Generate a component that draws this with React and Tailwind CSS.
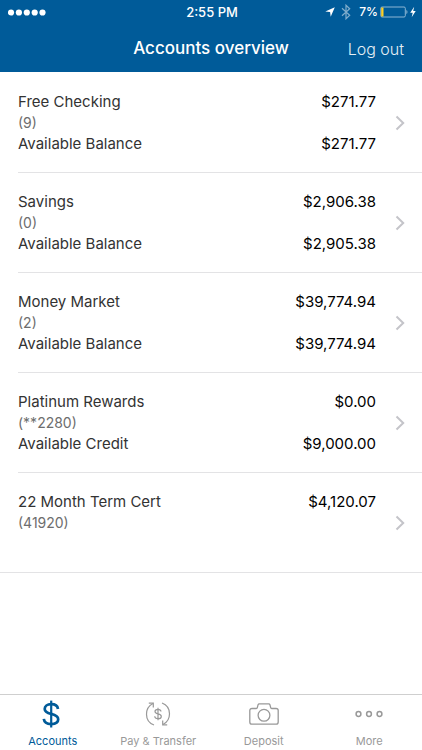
import React, { useState } from 'react';
import clsx from 'clsx';

const ACCOUNTS = [
  { name: 'Free Checking', detail: '(9)', amount: '$271.77', label: 'Available Balance', available: '$271.77' },
  { name: 'Savings', detail: '(0)', amount: '$2,906.38', label: 'Available Balance', available: '$2,905.38' },
  { name: 'Money Market', detail: '(2)', amount: '$39,774.94', label: 'Available Balance', available: '$39,774.94' },
  { name: 'Platinum Rewards', detail: '(**2280)', amount: '$0.00', label: 'Available Credit', available: '$9,000.00' },
  { name: '22 Month Term Cert', detail: '(41920)', amount: '$4,120.07' },
];

const DollarIcon = () => (
  <svg width="24" height="28" viewBox="0 0 24 28" fill="none" stroke="currentColor" strokeWidth="2.7">
    <path d="M17 9C16.600 5.800 14 4.200 10.200 4.200c-4 0-6.500 1.900-6.500 4.700 0 3 2.400 4 6.500 5 4.600 1.100 7 2.200 7 5.400 0 3-2.700 4.800-7 4.800-4.400 0-7-1.900-7.400-5.200" />
    <path d="M10.200.6v26.900" strokeWidth="2.200" />
  </svg>
);

const TransferIcon = () => (
  <svg width="26" height="26" viewBox="0 0 26 26" fill="none" stroke="currentColor" strokeWidth="1.2">
    <path d="M9 24C4.200 22.200 1.500 18 1.500 13.200 1.500 8.600 4 4.500 8 2.500" />
    <path d="M3.800 2.200H8.300V6.600" />
    <path d="M17 2C21.800 3.800 24.500 8 24.500 12.800 24.500 17.400 22 21.500 18 23.500" />
    <path d="M22.200 23.800H17.700V19.400" />
    <path d="M16 10.500C15.800 9.100 14.700 8.400 13 8.400c-1.800 0-3 .8-3 2.200 0 1.300 1 1.800 3 2.300 2.200.5 3.300 1 3.300 2.500s-1.300 2.300-3.200 2.300c-2 0-3.300-.9-3.400-2.500M13 6.800v12.500" />
  </svg>
);

const CameraIcon = () => (
  <svg width="30" height="22" viewBox="0 0 30 22" fill="none" stroke="currentColor" strokeWidth="1.300" strokeLinejoin="round">
    <path d="M3 5.500h4.300c.5 0 .9-.3 1-.8l.8-3c.2-.6.5-.9 1.100-.9h9.600c.6 0 .9.300 1.100.9l.8 3c.1.500.5.8 1 .8H27c1.300 0 2.200.8 2.200 2.100V19c0 1.300-.9 2.200-2.200 2.200H3C1.700 21.200.8 20.300.8 19V7.600c0-1.300.9-2.100 2.200-2.100Z" />
    <circle cx="15" cy="12.300" r="5.900" />
  </svg>
);

const MoreIcon = () => (
  <svg width="28" height="8" viewBox="0 0 28 8" fill="none" stroke="currentColor" strokeWidth="1.500">
    <circle cx="3.500" cy="4" r="2.400" />
    <circle cx="14" cy="4" r="2.400" />
    <circle cx="24.500" cy="4" r="2.400" />
  </svg>
);

const TABS = [
  { name: 'Accounts', Icon: DollarIcon },
  { name: 'Pay & Transfer', Icon: TransferIcon },
  { name: 'Deposit', Icon: CameraIcon },
  { name: 'More', Icon: MoreIcon },
];

const StatusBar = () => (
  <div className="grid grid-cols-[1fr_auto_1fr] items-center h-6 pl-2 pr-1.5 text-[13px] leading-6 font-medium">
    <svg width="38" height="7" viewBox="0 0 38 7" fill="currentColor">
      <circle cx="3" cy="3.500" r="3.100" />
      <circle cx="10.900" cy="3.500" r="3.100" />
      <circle cx="18.800" cy="3.500" r="3.100" />
      <circle cx="26.700" cy="3.500" r="3.100" />
      <circle cx="34.500" cy="3.500" r="3.100" />
    </svg>
    <span className="text-center">2:55 PM</span>
    <div className="flex items-center justify-end">
      <svg width="10" height="10" viewBox="0 0 10 10" fill="currentColor">
        <path d="M9.800.2 5.700 9.700 5.100 5 .3 4.400Z" />
      </svg>
      <svg className="ml-1.5 opacity-50" width="10" height="16" viewBox="0 0 10 16" fill="none" stroke="currentColor" strokeWidth="1.200">
        <path d="M1 4.300 8.700 11.300 5 14.800V1.200L8.700 4.700 1 11.700" />
      </svg>
      <span className="ml-2 text-xs">7%</span>
      <svg className="ml-0.5" width="36" height="12" viewBox="0 0 36 12" fill="none">
        <rect x=".8" y="1" width="24.500" height="10" rx="1.300" stroke="#8db7d4" />
        <path d="M1.200 1.500h2.300v9H1.200z" fill="#ffd024" />
        <path d="M26.500 4c1.200.5 1.200 3.500 0 4Z" fill="#b7d1e3" />
        <path d="M34.200.8 30.200 6.800h2.500l-1 4.500 4-6.200h-2.500Z" fill="currentColor" />
      </svg>
    </div>
  </div>
);

const AccountRow = ({ account }) => (
  <li className="pl-[18px] group">
    <a
      href="#account"
      className="flex items-center h-25 pr-[17px] border-b border-[#e3e3e5] group-last:-ml-[18px] group-last:pl-[18px]"
    >
      <div className="flex-1 min-w-0 h-16 text-[15px] leading-[21px] text-[#333]">
        <div className="flex justify-between">
          <span>{account.name}</span>
          <span className="text-black">{account.amount}</span>
        </div>
        <div className="text-sm leading-[21px] text-[#6d6d6d]">{account.detail}</div>
        {account.label && (
          <div className="flex justify-between">
            <span>{account.label}</span>
            <span className="text-black">{account.available}</span>
          </div>
        )}
      </div>
      <svg className="ml-[19px] shrink-0" width="10" height="16" viewBox="0 0 10 16" fill="none" stroke="#c4c4c9" strokeWidth="2">
        <path d="M1.500 1.500 8.200 8l-6.700 6.500" />
      </svg>
    </a>
  </li>
);

const App = () => {
  const [activeTab, setActiveTab] = useState('Accounts');

  return (
    <div className="flex flex-col min-h-screen bg-white font-['Inter','Liberation_Sans',sans-serif]">
      <header className="bg-[#005b99] text-white">
        <StatusBar />
        <div className="grid grid-cols-[1fr_auto_1fr] items-center h-12 pt-0.5">
          <h1 className="col-start-2 text-[17px] font-medium">Accounts overview</h1>
          <button type="button" className="justify-self-end mr-[18px] text-base font-light text-[#e5eff5]">
            Log out
          </button>
        </div>
      </header>

      <main className="flex-1 pt-px">
        <ul>
          {ACCOUNTS.map((account) => (
            <AccountRow key={account.name} account={account} />
          ))}
        </ul>
      </main>

      <nav className="grid grid-cols-4 border-t border-[#cfcfcf] bg-white">
        {TABS.map(({ name, Icon }) => (
          <button
            key={name}
            type="button"
            onClick={() => setActiveTab(name)}
            className={clsx(
              'flex flex-col items-center pt-1 pb-px text-[11px] leading-4',
              activeTab === name ? 'text-[#005b99]' : 'text-[#999]'
            )}
          >
            <span className="flex items-center justify-center h-[30px]">
              <Icon />
            </span>
            <span className="mt-1">{name}</span>
          </button>
        ))}
      </nav>
    </div>
  );
};

export default App;
